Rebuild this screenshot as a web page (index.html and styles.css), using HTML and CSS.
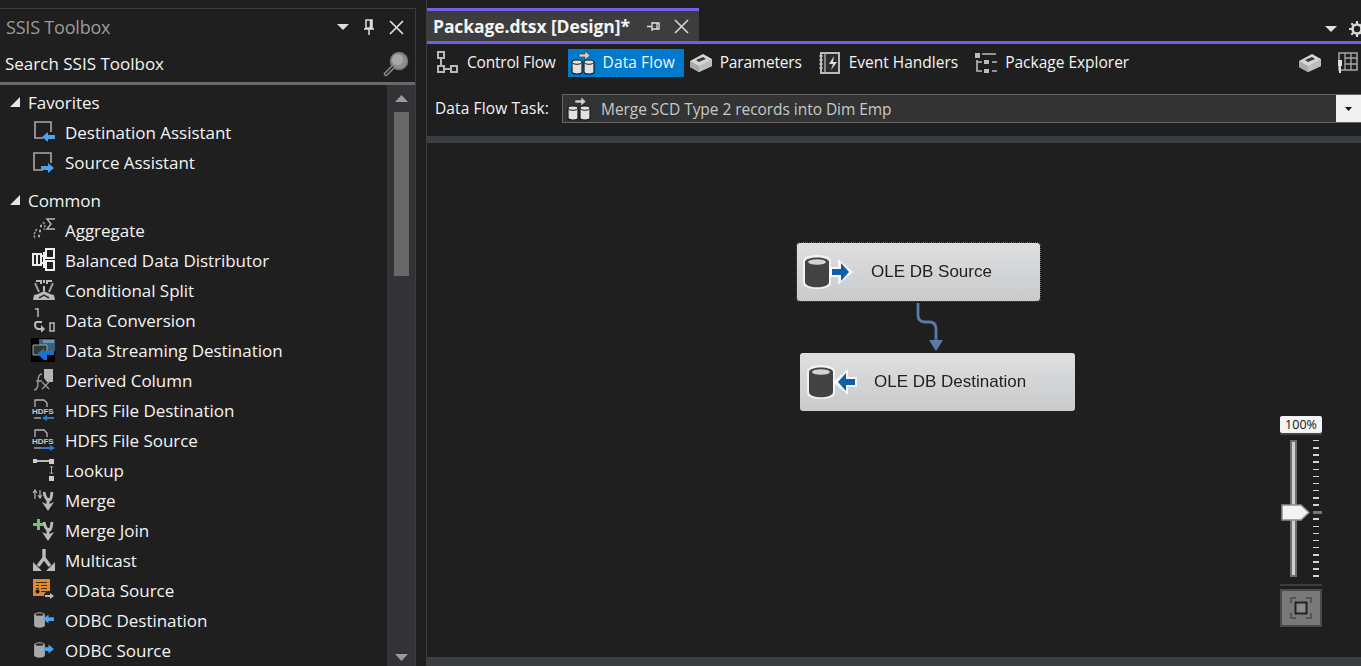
FILE: index.html
```html
<!DOCTYPE html>
<html lang="en">
<head>
<meta charset="utf-8">
<title>SSIS Toolbox</title>
<link rel="stylesheet" href="styles.css">
</head>
<body>
<svg class="defs" width="0" height="0" aria-hidden="true">
  <defs>
    <symbol id="stack" viewBox="0 0 24 24">
      <path d="M8 3h6V0l5 4.500L14 9V6H8z" fill="#cfcfcf" stroke="#333" stroke-width=".6"/>
      <g fill="#e2e2e2" stroke="#1a1a1a" stroke-width="1.200">
        <path d="M1 11a5 2 0 0 1 10 0v10a5 2 0 0 1-10 0z"/>
        <path d="M13 11a5 2 0 0 1 10 0v10a5 2 0 0 1-10 0z"/>
      </g>
      <path d="M1.500 11.500a4.500 1.800 0 0 0 9 0M13.500 11.500a4.500 1.800 0 0 0 9 0" fill="none" stroke="#1a1a1a"/>
    </symbol>
    <symbol id="box" viewBox="0 0 24 20">
      <path d="M1 8 14 1l9 5v7L10 19l-9-5z" fill="#d6d6d6"/>
      <path d="M1 8l9 5v6l-9-5z" fill="#a9a9a9"/>
      <path d="M10 13l13-7v7L10 19z" fill="#bdbdbd"/>
      <path d="M7 7l7-3 3 2-7 3z" fill="#3a3a3a"/>
    </symbol>
    <symbol id="db-big" viewBox="0 0 28 34">
      <path d="M0 6c0-8 28-8 28 0v22c0 8-28 8-28 0z" fill="#f2f2f2"/>
      <path d="M2 7c0-6 24-6 24 0v20c0 7-24 7-24 0z" fill="#434343"/>
      <ellipse cx="14" cy="7" rx="9" ry="2.800" fill="#d4d4d4"/>
    </symbol>
    <symbol id="odbc" viewBox="0 0 24 20">
      <path d="M1 4a6 2.500 0 0 1 12 0v12a6 2.500 0 0 1-12 0z" fill="#a8a8a8"/>
      <ellipse cx="7" cy="4" rx="4.500" ry="1.400" fill="#2a2a2a"/>
    </symbol>
    <symbol id="hdfs-base" viewBox="0 0 24 24">
      <path d="M3 9V2h9l3 3v4" fill="none" stroke="#b5b5b5" stroke-width="1.300"/>
      <path d="M2 20h7" stroke="#b5b5b5" stroke-width="1.300"/>
    </symbol>
  </defs>
</svg>

<aside class="toolbox">
  <header class="tool-title">
    <span class="tool-name">SSIS Toolbox</span>
    <span class="title-actions">
      <svg class="ic-menu" width="12" height="6" viewBox="0 0 12 6"><path d="M0 0h12L6 6z" fill="#e0e0e0"/></svg>
      <svg width="12" height="16" viewBox="0 0 12 16"><path d="M3 1h6v8H3zM1 10h10M6 10v6M7.500 1v8" fill="none" stroke="#e0e0e0" stroke-width="1.500"/></svg>
      <svg width="15" height="15" viewBox="0 0 15 15"><path d="M1 1l13 13M14 1 1 14" stroke="#e0e0e0" stroke-width="1.700"/></svg>
    </span>
  </header>
  <div class="search">
    <span>Search SSIS Toolbox</span>
    <svg width="26" height="26" viewBox="0 0 26 26"><circle cx="16" cy="10" r="8.500" fill="#8f8f8f" stroke="#777" stroke-width="1.500"/><circle cx="14.500" cy="8.500" r="5.500" fill="#a8a8a8"/><path d="M10 16 3 23" stroke="#8a8a8a" stroke-width="4.500" stroke-linecap="round"/><path d="M10 16 3 23" stroke="#222" stroke-width="1.400" stroke-linecap="round"/></svg>
  </div>
  <div class="tool-body">
    <div class="tool-list">
      <section class="group">
        <div class="group-head"><svg width="10" height="10" viewBox="0 0 10 10"><path d="M10 0v10H0z" fill="#e6e6e6"/></svg><span>Favorites</span></div>
        <div class="item"><svg viewBox="0 0 24 24"><path d="M11 18H3V2h16v10" fill="none" stroke="#a8a8a8" stroke-width="1.600"/><path d="M16 12v3h7v4h-7v3l-6-5z" fill="#4aa3ee"/></svg><span>Destination Assistant</span></div>
        <div class="item"><svg viewBox="0 0 24 24"><path d="M11 20H2V3h17v10" fill="none" stroke="#a8a8a8" stroke-width="1.600"/><path d="M16 13v3H9v4h7v3l6-5z" fill="#4aa3ee"/></svg><span>Source Assistant</span></div>
      </section>
      <section class="group">
        <div class="group-head"><svg width="10" height="10" viewBox="0 0 10 10"><path d="M10 0v10H0z" fill="#e6e6e6"/></svg><span>Common</span></div>
        <div class="item"><svg viewBox="0 0 24 24"><path d="M5 11q-4 4-2 10M11 4q3 3 1 8" fill="none" stroke="#999" stroke-width="1.600" stroke-dasharray="2.500 1"/><path d="M8 8h2M7 13h2M6 18h2" stroke="#aaa" stroke-width="2.400"/><path d="M23 1h-8l4 5-4 5h8" fill="none" stroke="#bbb" stroke-width="1.400"/></svg><span>Aggregate</span></div>
        <div class="item"><svg viewBox="0 0 24 24"><g fill="none" stroke="#eee" stroke-width="2"><path d="M1 6h8v11H1zM14 1h8v9h-8zM14 13h8v9h-8z"/><path d="M9 8h5M9 15h5M12 4v16M5 6v11"/></g></svg><span>Balanced Data Distributor</span></div>
        <div class="item"><svg viewBox="0 0 24 24"><path d="M2 17l4-1 6-3 6 3 4 1 1 5H1z" fill="#bbb"/><path d="M12 8v5M4 3h5v3M20 3h-5v3M12 2v3" fill="none" stroke="#bbb" stroke-width="2"/><path d="M7 14 3 5M17 14l4-9" stroke="#999" stroke-width="2"/><path d="M7 20l5-3 5 3" fill="none" stroke="#333" stroke-width="1.500"/></svg><span>Conditional Split</span></div>
        <div class="item"><svg viewBox="0 0 24 24"><path d="M3 1h3v8" fill="none" stroke="#bbb" stroke-width="1.500"/><path d="M10 14H5q-2 0-2 3t3 4h4" fill="none" stroke="#bbb" stroke-width="2"/><path d="M9 17v8l4-4z" fill="#bbb"/><path d="M18 15h4v8h-4z" fill="none" stroke="#bbb" stroke-width="1.500"/></svg><span>Data Conversion</span></div>
        <div class="item wide-ic"><svg viewBox="0 0 24 24"><path d="M0 0h24v24H0z" fill="#000"/><path d="M8 1h16v12H8z" fill="#36617f"/><path d="M12 2h11v3H12z" fill="#6f93ad"/><path d="M2 7h14v10H2z" fill="#2f3a36" stroke="#9aa" stroke-width="1"/><path d="M23 13v4h-7v5h-3L6 16l7-6v3z" fill="#1b6fd0"/></svg><span>Data Streaming Destination</span></div>
        <div class="item"><svg viewBox="0 0 24 24"><path d="M12 1h9v13h-6l-3-4z" fill="#b5b5b5"/><path d="M2 22q4 0 4-8t4-8M4 13h6M10 14l7 7M17 14l-7 7" fill="none" stroke="#999" stroke-width="1.400"/></svg><span>Derived Column</span></div>
        <div class="item"><svg viewBox="0 0 24 24"><use href="#hdfs-base"/><text class="hdfs" x="0" y="16">HDFS</text><path d="M15 17v2h7v2h-7v2l-5-3z" fill="#2a78d0"/></svg><span>HDFS File Destination</span></div>
        <div class="item"><svg viewBox="0 0 24 24"><use href="#hdfs-base"/><text class="hdfs" x="0" y="16">HDFS</text><path d="M18 17v2H9v2h9v2l5-3z" fill="#2a78d0"/></svg><span>HDFS File Source</span></div>
        <div class="item"><svg viewBox="0 0 24 24"><path d="M1 1h4v4H1zM17 1h5v5h-5zM17 18h5v5h-5z" fill="#ccc"/><path d="M5 3h12" stroke="#ccc" stroke-width="1.800"/><path d="M19.500 8v8M18 9.500 19.500 8 21 9.500M18 14.500l1.500 1.500 1.500-1.500" fill="none" stroke="#aaa"/></svg><span>Lookup</span></div>
        <div class="item"><svg viewBox="0 0 24 24"><path d="M3 3v8M1 5l2-3 2 3M8 10V2M6 7l2 3 2-3" fill="none" stroke="#aaa" stroke-width="1.300"/><path d="M12 4q1 6 4 8t4-8" fill="none" stroke="#bbb" stroke-width="2.800"/><path d="M10 14l4.500 2V10h3v6l4.500-2-6 9z" fill="#bbb"/></svg><span>Merge</span></div>
        <div class="item"><svg viewBox="0 0 24 24"><path d="M5 1h3v4h4v3H8v4H5V8H1V5h4z" fill="#6fc46f"/><path d="M12 4q1 6 4 8t4-8" fill="none" stroke="#bbb" stroke-width="2.800"/><path d="M10 14l4.500 2V10h3v6l4.500-2-6 9z" fill="#bbb"/></svg><span>Merge Join</span></div>
        <div class="item"><svg viewBox="0 0 24 24"><path d="M12 1v10M12 10 6 18M12 10l6 8" fill="none" stroke="#bbb" stroke-width="3.400"/><path d="M1 23v-9l9 9zM23 23v-9l-9 9z" fill="#bbb"/></svg><span>Multicast</span></div>
        <div class="item"><svg viewBox="0 0 24 24"><path d="M1 1h17v17H1z" fill="#e08a2b"/><path d="M4 4h11v1H4zM9 7h6v1H9zM9 10h6v1H9zM9 13h6v1H9zM4 7h3v1H4zM4 10h3v1H4z" fill="#4b2c08"/><circle cx="5.500" cy="13.500" r="2" fill="#111"/><circle cx="17" cy="18" r="5" fill="#222"/><path d="M13 17h5v-2l4 3-4 3v-2h-5z" fill="#bbb"/></svg><span>OData Source</span></div>
        <div class="item"><svg viewBox="0 0 24 20" class="odbc-ic"><use href="#odbc"/><path d="M17 4v3h6v4h-6v3l-6-5z" fill="#4aa3ee"/></svg><span>ODBC Destination</span></div>
        <div class="item"><svg viewBox="0 0 24 20" class="odbc-ic"><use href="#odbc"/><path d="M17 4v3h-5v4h5v3l6-5z" fill="#4aa3ee"/></svg><span>ODBC Source</span></div>
      </section>
    </div>
    <div class="scrollbar">
      <svg class="sb-arrow" width="13" height="7" viewBox="0 0 13 7"><path d="M6.500 0 13 7H0z" fill="#9a9a9a"/></svg>
      <div class="sb-thumb"></div>
      <svg class="sb-arrow sb-down" width="13" height="7" viewBox="0 0 13 7"><path d="M0 0h13L6.500 7z" fill="#9a9a9a"/></svg>
    </div>
  </div>
</aside>

<main class="designer">
  <div class="doc-tabs">
    <div class="doc-tab">
      <span class="doc-name">Package.dtsx [Design]*</span>
      <svg width="13" height="11" viewBox="0 0 13 11"><path d="M0 5.500h5M5 1v9M5 2h7v6H5M10 2v6" fill="none" stroke="#e0e0e0" stroke-width="1.300"/></svg>
      <svg width="15" height="15" viewBox="0 0 15 15"><path d="M1 1l13 13M14 1 1 14" stroke="#d8d8d8" stroke-width="1.600"/></svg>
    </div>
    <div class="doc-right">
      <svg width="12" height="6" viewBox="0 0 12 6"><path d="M0 0h12L6 6z" fill="#e0e0e0"/></svg>
      <svg class="gear" width="16" height="16" viewBox="0 0 16 16"><circle cx="8" cy="8" r="4.500" fill="none" stroke="#d8d8d8" stroke-width="2.600"/><path d="M8 0v3M8 13v3M0 8h3M13 8h3M2.300 2.300l2 2M11.700 11.700l2 2M13.700 2.300l-2 2M4.300 11.700l-2 2" stroke="#d8d8d8" stroke-width="2.200"/></svg>
    </div>
  </div>
  <nav class="design-tabs">
    <div class="dtab tight"><svg viewBox="0 0 24 24"><g fill="none" stroke="#b8b8b8" stroke-width="2"><path d="M3 1h6v6H3zM3 15h6v6H3zM16 15h6v6h-6z"/><path d="M6 8v6M10 18h5"/></g></svg><span>Control Flow</span></div>
    <div class="dtab dtab-active"><svg viewBox="0 0 24 24"><use href="#stack"/></svg><span>Data Flow</span></div>
    <div class="dtab tight"><svg viewBox="0 0 24 20"><use href="#box"/></svg><span>Parameters</span></div>
    <div class="dtab"><svg viewBox="0 0 24 24"><path d="M3 2h18v20H3z" fill="#2c2c2c" stroke="#bbb" stroke-width="2"/><path d="M6 3h2v18H6z" fill="#888"/><path d="M1 5h4M1 9h4M1 13h4M1 17h4" stroke="#ccc"/><path d="M16 5l-5 8h4l-2 6 6-8h-4z" fill="#ddd"/></svg><span>Event Handlers</span></div>
    <div class="dtab"><svg viewBox="0 0 24 24"><path d="M1 2h5v5H1zM10 9h5v4h-5zM10 18h5v4h-5z" fill="#bbb"/><path d="M8 3h14M18 11h5M18 20h5M3 9v11h5M3 11h5" fill="none" stroke="#bbb" stroke-width="1.600"/></svg><span>Package Explorer</span></div>
    <div class="dtab-end">
      <svg width="24" height="20" viewBox="0 0 24 20"><use href="#box"/></svg>
      <svg width="22" height="22" viewBox="0 0 22 22"><path d="M3 1h18v17H3z" fill="none" stroke="#a8a8a8" stroke-width="1.500"/><path d="M9 6h12M9 12h12M9 1v17M15 1v17" stroke="#a8a8a8" stroke-width="1.300"/><path d="M2 8h4v6H5v7H3v-7H2z" fill="#ddd"/></svg>
    </div>
  </nav>
  <div class="task-row">
    <label class="task-label">Data Flow Task:</label>
    <div class="task-combo">
      <svg width="24" height="24" viewBox="0 0 24 24"><use href="#stack"/></svg>
      <span class="task-value">Merge SCD Type 2 records into Dim Emp</span>
      <div class="combo-btn"><svg width="7" height="4" viewBox="0 0 7 4"><path d="M0 0h7L3.500 4z" fill="#111"/></svg></div>
    </div>
  </div>
  <div class="band"></div>
  <div class="canvas">
    <div class="node node-src">
      <svg class="node-ic" width="50" height="34" viewBox="0 0 50 34"><use href="#db-big" width="28" height="34"/><path d="M27 12h8V4l15 13-15 13v-8h-8z" fill="#fff" fill-opacity=".8"/><path d="M29 14h9V8l8 9-8 9v-6h-9z" fill="#0e5ea8"/></svg>
      <span>OLE DB Source</span>
    </div>
    <svg class="flow" width="30" height="52" viewBox="0 0 30 52"><path d="M5 0v12q0 7 7 7h4q7 0 7 7v14" fill="none" stroke="#5b7ba6" stroke-width="2.800"/><path d="M16 37h14l-7 11z" fill="#5b7ba6"/></svg>
    <div class="node node-dst">
      <svg class="node-ic" width="50" height="34" viewBox="0 0 50 34"><use href="#db-big" width="28" height="34"/><path d="M50 12h-9V4L26 17l15 13v-8h9z" fill="#fff" fill-opacity=".8"/><path d="M48 14h-9V8l-8 9 8 9v-6h9z" fill="#0e5ea8"/></svg>
      <span>OLE DB Destination</span>
    </div>
    <div class="zoomer">
      <div class="zoom-label">100%</div>
      <div class="zoom-rule"></div>
      <div class="zoom-slider">
        <div class="zoom-track"></div>
        <svg class="zoom-thumb" width="29" height="17" viewBox="0 0 29 17"><path d="M1 1h19l8 7.500-8 7.500H1z" fill="#f2f2f2" stroke="#8c8c8c" stroke-width="1.500"/></svg>
        <div class="zoom-ticks"></div>
        <div class="zoom-mark"></div>
      </div>
      <div class="zoom-sep"></div>
      <div class="zoom-fit">
        <svg width="24" height="24" viewBox="0 0 24 24"><path d="M2 7V2h5M17 2h5v5M22 17v5h-5M7 22H2v-5" fill="none" stroke="#555" stroke-width="2"/><path d="M6.500 6.500h11v11h-11z" fill="#8a8a8a" stroke="#222" stroke-width="2"/></svg>
      </div>
    </div>
  </div>
  <div class="band band-bottom"></div>
</main>
</body>
</html>
```

FILE: styles.css
```css
* { box-sizing: border-box; }
html, body { height: 100%; }
body {
  margin: 0;
  width: 1361px;
  height: 666px;
  overflow: hidden;
  display: flex;
  background: #1f1f1f;
  color: #f4f4f4;
  font-family: "Open Sans", "Noto Sans", sans-serif;
  font-size: 16px;
}
.defs { position: absolute; }
svg { display: block; flex: none; }

/* toolbox */
.toolbox {
  width: 416px;
  margin-top: 8px;
  border-top: 1px solid #3d3d3d;
  border-right: 1px solid #3d3d3d;
  display: flex;
  flex-direction: column;
  flex: none;
  height: 658px;
}
.tool-title {
  height: 36px;
  flex: none;
  display: flex;
  align-items: center;
  justify-content: space-between;
  padding: 0 11px 0 6px;
}
.tool-name { color: #9b9b9b; font-size: 18px; letter-spacing: -.2px; }
.title-actions { display: flex; align-items: center; gap: 14px; }
.search {
  height: 40px;
  flex: none;
  display: flex;
  align-items: center;
  justify-content: space-between;
  padding: 0 6px 0 5px;
  border-bottom: 3px solid #6b6b6b;
  font-size: 17px;
}
.tool-body { flex: 1; min-height: 0; display: flex; }
.tool-list { flex: 1; padding-top: 2px; overflow: hidden; font-size: 17px; letter-spacing: -.03px; }
.group { margin-bottom: 8px; }
.group-head { height: 30px; display: flex; align-items: center; gap: 8px; padding-left: 10px; }
.item { height: 30px; display: flex; align-items: center; gap: 9px; padding-left: 32px; }
.item svg { width: 24px; height: 24px; }
.item .odbc-ic { width: 22px; height: 18px; margin: 0 1px 0 1px; }
.item.wide-ic svg { margin-left: -1px; margin-right: 1px; }
.hdfs { font: bold 8px "Liberation Sans", sans-serif; fill: #c8c8c8; }

.scrollbar {
  width: 28px;
  background: #333337;
  display: flex;
  flex-direction: column;
  align-items: center;
}
.sb-arrow { margin-top: 10px; }
.sb-thumb { width: 15px; height: 164px; margin-top: 10px; background: #686868; }
.sb-down { margin-top: auto; margin-bottom: 5px; }

/* designer */
.designer {
  flex: 1;
  min-width: 0;
  margin-left: 10px;
  display: flex;
  flex-direction: column;
  border-left: 1px solid #3d3d3d;
}
.doc-tabs {
  height: 44px;
  flex: none;
  padding-top: 8px;
  border-bottom: 3px solid #7160e8;
  display: flex;
  justify-content: space-between;
  align-items: stretch;
}
.doc-tab {
  width: 272px;
  border-top: 3px solid #7160e8;
  background: #3d3d3d;
  display: flex;
  align-items: center;
  padding-left: 6px;
}
.doc-name { font-weight: 700; font-size: 17.500px; letter-spacing: -.1px; width: 214px; white-space: nowrap; }
.doc-tab svg:last-child { margin-left: 14px; }
.doc-right { display: flex; align-items: center; gap: 12px; margin-right: -4px; padding-top: 8px; }
.design-tabs { height: 36px; flex: none; display: flex; align-items: center; padding: 0 0 0 8px; margin-top: 1px; font-size: 15.500px; }
.dtab { height: 28px; display: flex; align-items: center; gap: 7px; margin-right: 16px; white-space: nowrap; }
.dtab span { padding-bottom: 2px; }
.dtab svg { width: 24px; height: 24px; }
.tight { letter-spacing: -.2px; margin-right: 16px; }
.tight:first-child { gap: 8px; margin-right: 13px; }
.dtab-active { background: #007acc; padding: 0 9px 0 3px; gap: 8px; margin-right: 5px; margin-left: -1px; letter-spacing: .1px; }
.dtab-end { margin-left: auto; display: flex; align-items: center; gap: 14px; margin-right: 3px; }
.task-row { height: 55px; flex: none; padding: 13px 0 0 8px; display: flex; align-items: flex-start; }
.task-label { font-size: 15.500px; line-height: 29px; letter-spacing: .12px; width: 127px; flex: none; white-space: nowrap; }
.task-combo {
  flex: 1;
  height: 29px;
  background: #333;
  border: 1px solid #666;
  border-right: 0;
  display: flex;
  align-items: center;
  padding-left: 4px;
}
.task-value { color: #c8c8c8; font-size: 15.500px; letter-spacing: -.05px; margin-left: 10px; flex: 1; }
.combo-btn { width: 25px; height: 27px; background: #f0f0f0; display: flex; align-items: center; justify-content: center; }
.band { height: 7px; background: #3a3d40; flex: none; }
.band-bottom { height: 9px; }
.canvas { flex: 1; position: relative; min-height: 0; }

.node {
  position: absolute;
  height: 58px;
  display: flex;
  align-items: center;
  color: #222;
  font-family: "Liberation Sans", sans-serif;
  font-size: 17px;
  border-radius: 3px;
  background: linear-gradient(#dedfe1, #c9cacc);
}
.node-ic { filter: blur(.4px); }
.node span { filter: blur(.3px); }
.node-src { left: 370px; top: 100px; width: 243px; padding-left: 6px; gap: 18px; outline: 1px dotted #000; box-shadow: 0 0 0 1px #666; }
.node-dst { left: 373px; top: 210px; width: 275px; padding-left: 7px; gap: 17px; }
.flow { position: absolute; left: 486px; top: 160px; filter: blur(.3px); }

.zoomer { position: absolute; left: 853px; top: 273px; width: 42px; display: flex; flex-direction: column; }
.zoom-label { height: 17px; background: #f4f4f4; border-radius: 2px; color: #111; font-size: 12.500px; line-height: 17px; text-align: center; }
.zoom-rule { height: 2px; background: #444; }
.zoom-slider { height: 137px; margin-top: 5px; position: relative; }
.zoom-track { position: absolute; left: 10px; top: 0; width: 7px; height: 137px; background: #cfcfcf; border: 2px solid #6d6d6d; }
.zoom-thumb { position: absolute; left: 1px; top: 64px; }
.zoom-ticks {
  position: absolute;
  left: 33px;
  top: 0;
  width: 6px;
  height: 137px;
  background: repeating-linear-gradient(#d4d4d4 0 1.500px, transparent 1.500px 7.130px);
}
.zoom-mark { position: absolute; left: 33px; top: 71px; width: 9px; height: 3px; background: #777; }
.zoom-sep { height: 2px; background: #3d3d3d; margin-top: 7px; }
.zoom-fit { height: 38px; margin-top: 3px; background: #787878; border: 2px solid #4a4a4a; display: flex; align-items: center; justify-content: center; }
```
